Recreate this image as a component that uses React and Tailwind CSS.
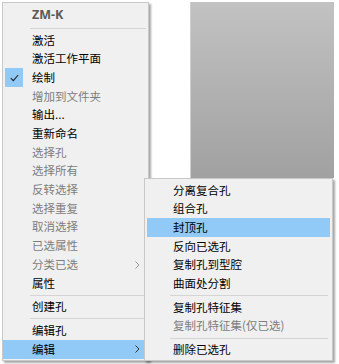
import React from "react";

const FONT = { fontFamily: '"Noto Sans CJK SC", "Noto Sans", sans-serif' };

function Chevron({ disabled }) {
  return (
    <svg width="5" height="8" viewBox="0 0 5 8" className="absolute right-[8px] top-1/2 -translate-y-1/2">
      <path d="M0.5 0.5 L4 4 L0.5 7.5" fill="none" stroke={disabled ? "#9a9a9a" : "#333"} strokeWidth="1" />
    </svg>
  );
}

function Row({ label, disabled, checked, active, sub, pl = "pl-[29px]" }) {
  return (
    <div
      className={`relative flex h-[18.7px] items-center ${pl} text-[11.5px] leading-none ${
        active ? "bg-[#91c9f7]" : ""
      } ${disabled ? "text-[#7d7d7d]" : "text-black"}`}
    >
      {checked && (
        <div className="absolute left-[2px] top-0 flex h-full w-[18px] items-center justify-center bg-[#91c9f7]">
          <svg width="9" height="8" viewBox="0 0 9 8">
            <path d="M0.8 4.2 L3.3 6.6 L8.2 1" fill="none" stroke="#222" strokeWidth="1.1" />
          </svg>
        </div>
      )}
      <span>{label}</span>
      {sub && <Chevron disabled={disabled} />}
    </div>
  );
}

function Sep({ ml = "ml-[27px]" }) {
  return (
    <div className="flex h-[5px] items-start pt-[2px]">
      <div className={`h-px flex-1 ${ml} mr-[2px] bg-[#d5d5d5]`} />
    </div>
  );
}

export default function App() {
  const main1 = [
    { label: "激活" },
    { label: "激活工作平面" },
    { label: "绘制", checked: true },
    { label: "增加到文件夹", disabled: true },
    { label: "输出..." },
    { label: "重新命名" },
    { label: "选择孔", disabled: true },
    { label: "选择所有", disabled: true },
    { label: "反转选择", disabled: true },
    { label: "选择重复", disabled: true },
    { label: "取消选择", disabled: true },
    { label: "已选属性", disabled: true },
    { label: "分类已选", disabled: true, sub: true },
    { label: "属性" },
  ];
  const subA = ["分离复合孔", "组合孔", "封顶孔", "反向已选孔", "复制孔到型腔", "曲面处分割"];

  return (
    <div className="relative h-[364px] w-[339px] overflow-hidden bg-white" style={FONT}>
      <div className="flex items-start pl-[2px] pt-[2px]">
        {/* main menu */}
        <div className="relative z-10 w-[147px] border border-[#c8c8c8] bg-[#f0f0f0] pb-[1px] pt-[2px] shadow-[2px_2px_2px_rgba(0,0,0,0.35)]">
          <div
            className="flex h-[21px] items-center pl-[29px] text-[12.5px] font-bold text-[#5a5a5a]"
            style={{ fontFamily: '"Noto Sans", "Open Sans", sans-serif' }}
          >
            ZM-K
          </div>
          <Sep />
          {main1.map((r) => (
            <Row key={r.label} {...r} />
          ))}
          <Sep />
          <Row label="创建孔" />
          <Sep />
          <Row label="编辑孔" />
          <Row label="编辑" active sub />
        </div>
        {/* background viewport */}
        <div className="ml-[41px] h-[176px] w-[144px] border-l border-[#cfcfcf] bg-gradient-to-b from-[#c2c2c2] to-[#a1a1a1]" />
      </div>

      {/* submenu */}
      <div className="absolute left-[144px] top-[178px] z-20 w-[189px] border border-[#c8c8c8] bg-[#f0f0f0] px-[2px] pb-[1px] pt-[2px] shadow-[2px_2px_2px_rgba(0,0,0,0.35)]">
        {subA.map((l) => (
          <Row key={l} label={l} active={l === "封顶孔"} pl="pl-[26px]" />
        ))}
        <Sep ml="ml-[23px]" />
        <Row label="复制孔特征集" pl="pl-[26px]" />
        <Row label="复制孔特征集(仅已选)" disabled pl="pl-[26px]" />
        <Sep ml="ml-[23px]" />
        <Row label="删除已选孔" pl="pl-[26px]" />
      </div>
    </div>
  );
}
